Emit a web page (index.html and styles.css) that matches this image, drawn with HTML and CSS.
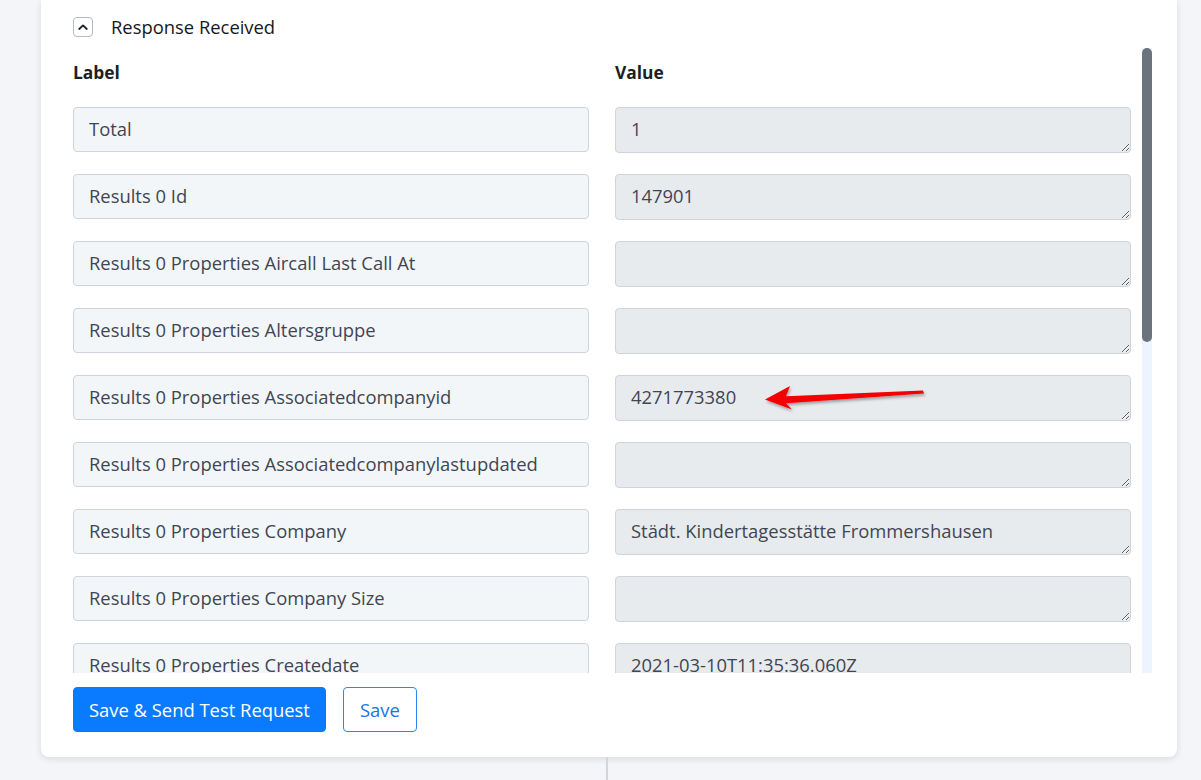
FILE: index.html
```html
<!DOCTYPE html>
<html lang="en">
<head>
<meta charset="utf-8">
<title>Response Received</title>
<link rel="stylesheet" href="styles.css">
</head>
<body>
<div class="page">
  <section class="card">
    <header class="card-head">
      <button class="toggle" type="button" aria-label="Collapse">
        <svg width="12" height="8" viewBox="0 0 12 8"><path d="M2.2 6 L6 2.4 L9.8 6" fill="none" stroke="#1f2329" stroke-width="1.8" stroke-linecap="round" stroke-linejoin="round"/></svg>
      </button>
      <h2 class="card-title">Response Received</h2>
    </header>

    <div class="scroll-frame">
      <div class="scroll">
        <div class="grid">
          <div class="col-head">Label</div>
          <div class="col-head">Value</div>

          <input class="label-field" readonly value="Total">
          <textarea class="value-field" readonly>1</textarea>

          <input class="label-field" readonly value="Results 0 Id">
          <textarea class="value-field" readonly>147901</textarea>

          <input class="label-field" readonly value="Results 0 Properties Aircall Last Call At">
          <textarea class="value-field" readonly></textarea>

          <input class="label-field" readonly value="Results 0 Properties Altersgruppe">
          <textarea class="value-field" readonly></textarea>

          <input class="label-field" readonly value="Results 0 Properties Associatedcompanyid">
          <textarea class="value-field" readonly>4271773380</textarea>

          <input class="label-field" readonly value="Results 0 Properties Associatedcompanylastupdated">
          <textarea class="value-field" readonly></textarea>

          <input class="label-field" readonly value="Results 0 Properties Company">
          <textarea class="value-field" readonly>Städt. Kindertagesstätte Frommershausen</textarea>

          <input class="label-field" readonly value="Results 0 Properties Company Size">
          <textarea class="value-field" readonly></textarea>

          <input class="label-field" readonly value="Results 0 Properties Createdate">
          <textarea class="value-field" readonly>2021-03-10T11:35:36.060Z</textarea>

          <input class="label-field" readonly value="Results 0 Properties Email">
          <textarea class="value-field" readonly>kita.frommershausen@vellmar.de</textarea>

          <input class="label-field" readonly value="Results 0 Properties Firstname">
          <textarea class="value-field" readonly>Sabine</textarea>

          <input class="label-field" readonly value="Results 0 Properties Hs Object Id">
          <textarea class="value-field" readonly>147901</textarea>
        </div>
      </div>
      <!-- scrollbar of the result list, kept at its top position -->
      <div class="scroll-track" aria-hidden="true">
        <div class="scroll-thumb"></div>
      </div>
    </div>

    <footer class="actions">
      <button class="btn btn-primary" type="button">Save &amp; Send Test Request</button>
      <button class="btn btn-outline" type="button">Save</button>
    </footer>
  </section>

  <div class="below">
    <div class="below-left"></div>
    <div class="below-right"></div>
  </div>

  <!-- annotation arrow pointing at the company id value -->
  <svg class="pointer" width="180" height="40" viewBox="0 0 180 40">
    <defs>
      <filter id="arrow-shadow" x="-10%" y="-50%" width="120%" height="200%">
        <feDropShadow dx="1" dy="2" stdDeviation="1.5" flood-color="#000" flood-opacity="0.35"/>
      </filter>
    </defs>
    <polygon points="5,19.5 30,6 26,16.2 163,10.4 164,13.6 26,23.3 32,29.5" fill="#f50000" filter="url(#arrow-shadow)"/>
  </svg>
</div>
</body>
</html>
```

FILE: styles.css
```css
* {
  box-sizing: border-box;
}

html, body {
  margin: 0;
  height: 100%;
}

body {
  background: #f3f5f8;
  font-family: "Open Sans", "Noto Sans", sans-serif;
  color: #3e4450;
  overflow: hidden;
}

.page {
  position: relative;
  width: 1201px;
  height: 780px;
}

.card {
  margin-left: 41px;
  width: 1136px;
  height: 757px;
  background: #fff;
  border-radius: 0 0 8px 8px;
  box-shadow: 0 2px 6px rgba(30, 40, 60, 0.12);
  padding: 17px 25px 0 32px;
  display: flex;
  flex-direction: column;
}

.card-head {
  display: flex;
  align-items: center;
  gap: 18px;
  height: 20px;
}

.toggle {
  width: 20px;
  height: 20px;
  padding: 0;
  border: 1px solid #b4bac2;
  border-radius: 4px;
  background: #fff;
  display: flex;
  align-items: center;
  justify-content: center;
}

.card-title {
  margin: 0;
  font-size: 18.4px;
  font-weight: 400;
  color: #16181c;
  line-height: 20px;
}

.scroll-frame {
  margin-top: 11px;
  height: 625px;
  display: flex;
  gap: 11px;
}

.scroll {
  flex: 1;
  overflow: hidden;
}

.scroll-track {
  width: 10px;
  background: #edf4fd;
  display: flex;
  flex-direction: column;
}

.scroll-thumb {
  height: 294px;
  background: #6b737c;
  border-radius: 5px;
}

.grid {
  display: grid;
  grid-template-columns: 516px 516px;
  column-gap: 26px;
  row-gap: 21px;
  padding-top: 14px;
  align-items: start;
}

.col-head {
  font-size: 17.4px;
  font-weight: 700;
  color: #1c1f24;
  line-height: 20px;
  margin-bottom: 4px;
}

.label-field,
.value-field {
  font: inherit;
  font-size: 18.4px;
  color: #3f4651;
  border: 1px solid #cfd4da;
  border-radius: 4px;
  padding: 0 15px;
  outline: none;
  width: 516px;
}

.label-field {
  height: 45px;
  background: #f3f6f9;
  padding-bottom: 2px;
}

.value-field {
  height: 46px;
  background: #e8ebee;
  padding-top: 8px;
  padding-bottom: 8px;
  line-height: 26px;
  resize: vertical;
  overflow: hidden;
}

.actions {
  display: flex;
  gap: 17px;
  margin-top: 14px;
}

.btn {
  font: inherit;
  font-size: 18.4px;
  height: 45px;
  border-radius: 4px;
  padding: 0 15px;
  cursor: pointer;
}

.btn-outline {
  padding: 0 16px;
}

.btn-primary {
  background: #0a7bff;
  border: 1px solid #0a7bff;
  color: #fff;
}

.btn-outline {
  background: #fff;
  border: 1px solid #2b86f5;
  color: #1a73e8;
}

.below {
  display: flex;
  height: 23px;
}

.below-left {
  width: 608px;
  border-right: 2px solid #d2d6dc;
}

.below-right {
  flex: 1;
}

.pointer {
  position: absolute;
  left: 760px;
  top: 380px;
}
```
